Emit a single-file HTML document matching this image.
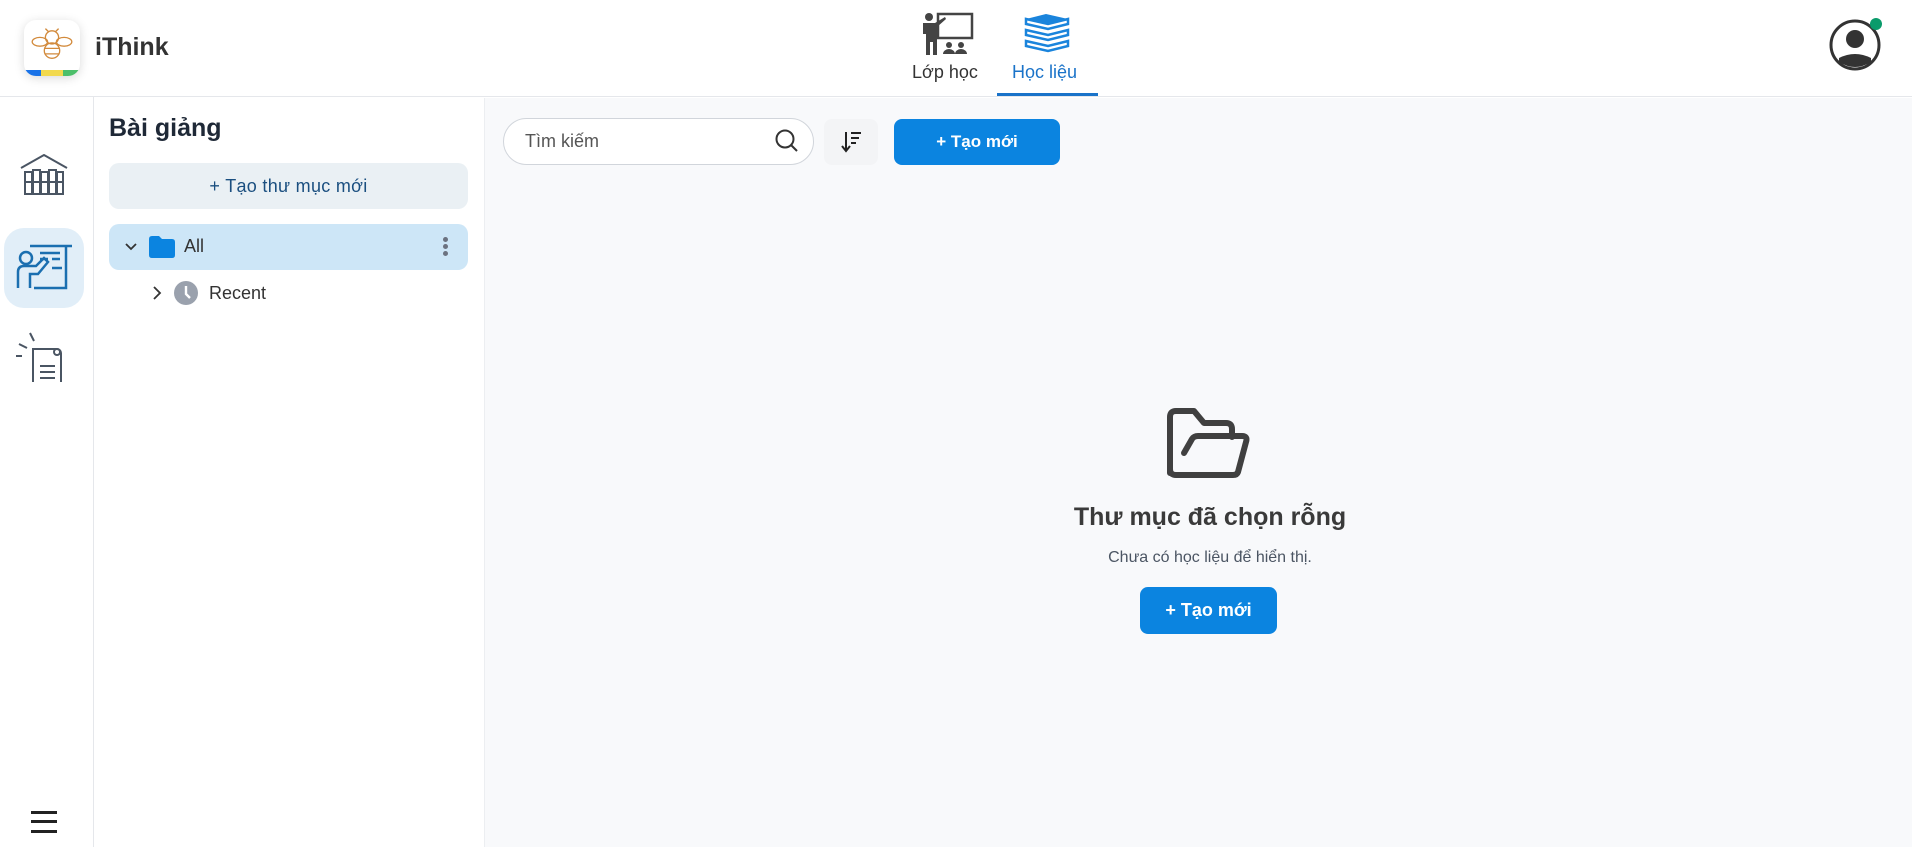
<!DOCTYPE html>
<html><head><meta charset="utf-8"><style>
*{box-sizing:border-box;margin:0;padding:0}
body{width:1912px;height:847px;overflow:hidden;background:#fff;font-family:"Liberation Sans",sans-serif;position:relative;color:#222}
.abs{position:absolute}
</style></head><body>
<div class="abs" style="left:0;top:0;width:1912px;height:97px;border-bottom:1px solid #e5e7eb;background:#fff"></div>
<div class="abs" style="left:24px;top:20px;width:56px;height:56px;border-radius:12px;background:#fff;box-shadow:0 2px 10px rgba(0,0,0,.15);overflow:hidden">
 <div class="abs" style="left:0;bottom:0;width:100%;height:6px;background:linear-gradient(90deg,#1a73e8 0 30%,#f2d94e 30% 70%,#4cbf6a 70%)"></div>
 <svg class="abs" style="left:6px;top:4px" width="44" height="40" viewBox="0 0 40 36" fill="none" stroke="#d28a3c" stroke-width="1.2"><circle cx="20" cy="12" r="6"/><ellipse cx="9" cy="16" rx="7" ry="4"/><ellipse cx="31" cy="16" rx="7" ry="4"/><ellipse cx="20" cy="24" rx="7" ry="7"/><path d="M14 4l3 3M26 4l-3 3M13 22h14M14 27h12"/></svg>
</div>
<div class="abs" style="left:95px;top:33px;font-size:25px;font-weight:bold;color:#333">iThink</div>

<svg class="abs" style="left:920px;top:12px" width="55" height="45" viewBox="0 0 55 45"><rect x="18" y="2" width="34" height="24" fill="none" stroke="#444" stroke-width="2.5"/><circle cx="9" cy="5" r="4" fill="#444"/><path d="M3 11h12l10-6 1 2-9 8v28h-4V30h-3v13H6V22H3z" fill="#444"/><circle cx="29" cy="33" r="3" fill="#444"/><circle cx="41" cy="33" r="3" fill="#444"/><path d="M23 42a6 5 0 0 1 12 0zM35 42a6 5 0 0 1 12 0z" fill="#444"/></svg>
<div class="abs" style="left:912px;top:62px;font-size:18px;color:#333">Lớp học</div>
<svg class="abs" style="left:1022px;top:13px" width="50" height="42" viewBox="0 0 50 42" fill="#1a84dc"><path d="M4 6l20-5 22 5-20 5z"/><path d="M4 6v5l22 5 20-5V6l-20 5z" fill="none" stroke="#1a84dc" stroke-width="2.5"/><path d="M4 17l22 5 20-5v5l-20 5-22-5z" fill="none" stroke="#1a84dc" stroke-width="2.5"/><path d="M4 28l22 5 20-5v5l-20 5-22-5z" fill="none" stroke="#1a84dc" stroke-width="2.5"/></svg>
<div class="abs" style="left:1012px;top:62px;font-size:18px;color:#1a73c9">Học liệu</div>
<div class="abs" style="left:997px;top:93px;width:101px;height:3px;background:#1a73c9"></div>

<svg class="abs" style="left:1828px;top:18px" width="60" height="56" viewBox="0 0 60 56"><circle cx="27" cy="27" r="24" fill="none" stroke="#333" stroke-width="3"/><circle cx="27" cy="21" r="9" fill="#333"/><path d="M11 40q16-8 32 0v4q-16 10-32 0z" fill="#333"/><circle cx="48" cy="6" r="6" fill="#0a9b6b"/></svg>

<div class="abs" style="left:93px;top:97px;width:1px;height:750px;background:#e5e7eb"></div>
<svg class="abs" style="left:20px;top:154px" width="48" height="42" viewBox="0 0 48 42" fill="none" stroke="#4a5563" stroke-width="2"><path d="M1 14L24 1l23 13"/><rect x="5" y="18" width="7" height="22"/><rect x="13" y="16" width="7" height="24"/><rect x="21" y="18" width="7" height="22"/><rect x="29" y="16" width="7" height="24"/><rect x="37" y="18" width="6" height="22"/><path d="M5 28h38"/></svg>
<div class="abs" style="left:4px;top:228px;width:80px;height:80px;border-radius:20px;background:#e1eef8"></div>
<svg class="abs" style="left:16px;top:244px" width="56" height="46" viewBox="0 0 56 46" fill="none" stroke="#1b6fb0" stroke-width="2.5"><path d="M14 2h50M50 2v42H18"/><circle cx="10" cy="14" r="6"/><path d="M2 44V28q0-6 6-6h12l8-8 4 4-10 12H14v14"/><path d="M24 9h20M24 15h8M36 15h8M36 24h10"/></svg>
<svg class="abs" style="left:14px;top:332px" width="56" height="52" viewBox="0 0 56 52" fill="none" stroke="#4a5563" stroke-width="2"><path d="M16 1l4 8M5 12l8 4M2 24h6"/><path d="M19 50V17h24a4 4 0 0 1 4 4v29"/><circle cx="43" cy="20" r="3"/><path d="M26 34h15M26 40h15M26 46h15"/></svg>
<div class="abs" style="left:31px;top:811px;width:26px;height:2.5px;background:#222;box-shadow:0 9px 0 #222,0 19px 0 #222"></div>

<div class="abs" style="left:109px;top:114px;font-size:25px;font-weight:bold;color:#1f2937">Bài giảng</div>
<div class="abs" style="left:109px;top:163px;width:359px;height:46px;border-radius:10px;background:#eaf0f4;text-align:center;line-height:46px;font-size:18px;color:#1b4f80;letter-spacing:0.3px">+ Tạo thư mục mới</div>
<div class="abs" style="left:109px;top:224px;width:359px;height:46px;border-radius:10px;background:#cde6f7"></div>
<svg class="abs" style="left:123px;top:238px" width="16" height="16" viewBox="0 0 16 16"><path d="M3 6l5 5 5-5" fill="none" stroke="#333" stroke-width="1.8"/></svg>
<svg class="abs" style="left:149px;top:236px" width="26" height="22" viewBox="0 0 26 22"><path d="M0 3q0-3 3-3h7l3 3h10q3 0 3 3v13q0 3-3 3H3q-3 0-3-3z" fill="#0b84e0"/></svg>
<div class="abs" style="left:184px;top:236px;font-size:18px;color:#333">All</div>
<div class="abs" style="left:443px;top:237px;width:5px;height:5px;border-radius:50%;background:#6b7280;box-shadow:0 7px 0 #6b7280,0 14px 0 #6b7280"></div>
<svg class="abs" style="left:150px;top:285px" width="14" height="16" viewBox="0 0 14 16"><path d="M4 2l6 6-6 6" fill="none" stroke="#333" stroke-width="1.8"/></svg>
<svg class="abs" style="left:174px;top:281px" width="24" height="24" viewBox="0 0 24 24"><circle cx="12" cy="12" r="12" fill="#9aa1ad"/><path d="M12 5v8l4 4" fill="none" stroke="#fff" stroke-width="2.4"/></svg>
<div class="abs" style="left:209px;top:283px;font-size:18px;color:#333">Recent</div>

<div class="abs" style="left:484px;top:98px;width:1428px;height:749px;background:#f8f9fb;border-left:1px solid #eceef1"></div>
<div class="abs" style="left:503px;top:118px;width:311px;height:47px;border-radius:24px;background:#fff;border:1px solid #d1d5db"></div>
<div class="abs" style="left:525px;top:131px;font-size:18px;color:#555">Tìm kiếm</div>
<svg class="abs" style="left:774px;top:128px" width="26" height="26" viewBox="0 0 26 26" fill="none" stroke="#333" stroke-width="2"><circle cx="11" cy="11" r="8.5"/><path d="M17 17l6 6"/></svg>
<div class="abs" style="left:824px;top:119px;width:54px;height:46px;border-radius:8px;background:#f3f4f6"></div>
<svg class="abs" style="left:840px;top:130px" width="24" height="24" viewBox="0 0 24 24" fill="none" stroke="#222" stroke-width="2"><path d="M6 2v18M2 16l4 5 4-5M11 3h10M11 8h8M11 13h5"/></svg>
<div class="abs" style="left:894px;top:119px;width:166px;height:46px;border-radius:8px;background:#0b84e0;color:#fff;text-align:center;line-height:46px;font-size:17px;font-weight:bold">+ Tạo mới</div>

<svg class="abs" style="left:1166px;top:407px" width="86" height="76" viewBox="0 0 86 76" fill="none" stroke="#404040" stroke-width="6" stroke-linejoin="round" stroke-linecap="round"><path d="M4 66V10q0-6 6-6h18l10 12h22q6 0 6 6v8"/><path d="M18 46l8-14q2-3 6-3h44q6 0 4 6l-8 30q-1 3-5 3H10q-6 0-6-6"/></svg>
<div class="abs" style="left:1040px;top:503px;width:340px;text-align:center;font-size:25px;font-weight:bold;color:#3a3a3a">Thư mục đã chọn rỗng</div>
<div class="abs" style="left:1040px;top:549px;width:340px;text-align:center;font-size:16px;color:#4b5563">Chưa có học liệu để hiển thị.</div>
<div class="abs" style="left:1140px;top:587px;width:137px;height:47px;border-radius:8px;background:#0b84e0;color:#fff;text-align:center;line-height:47px;font-size:18px;font-weight:bold">+ Tạo mới</div>
</body></html>
